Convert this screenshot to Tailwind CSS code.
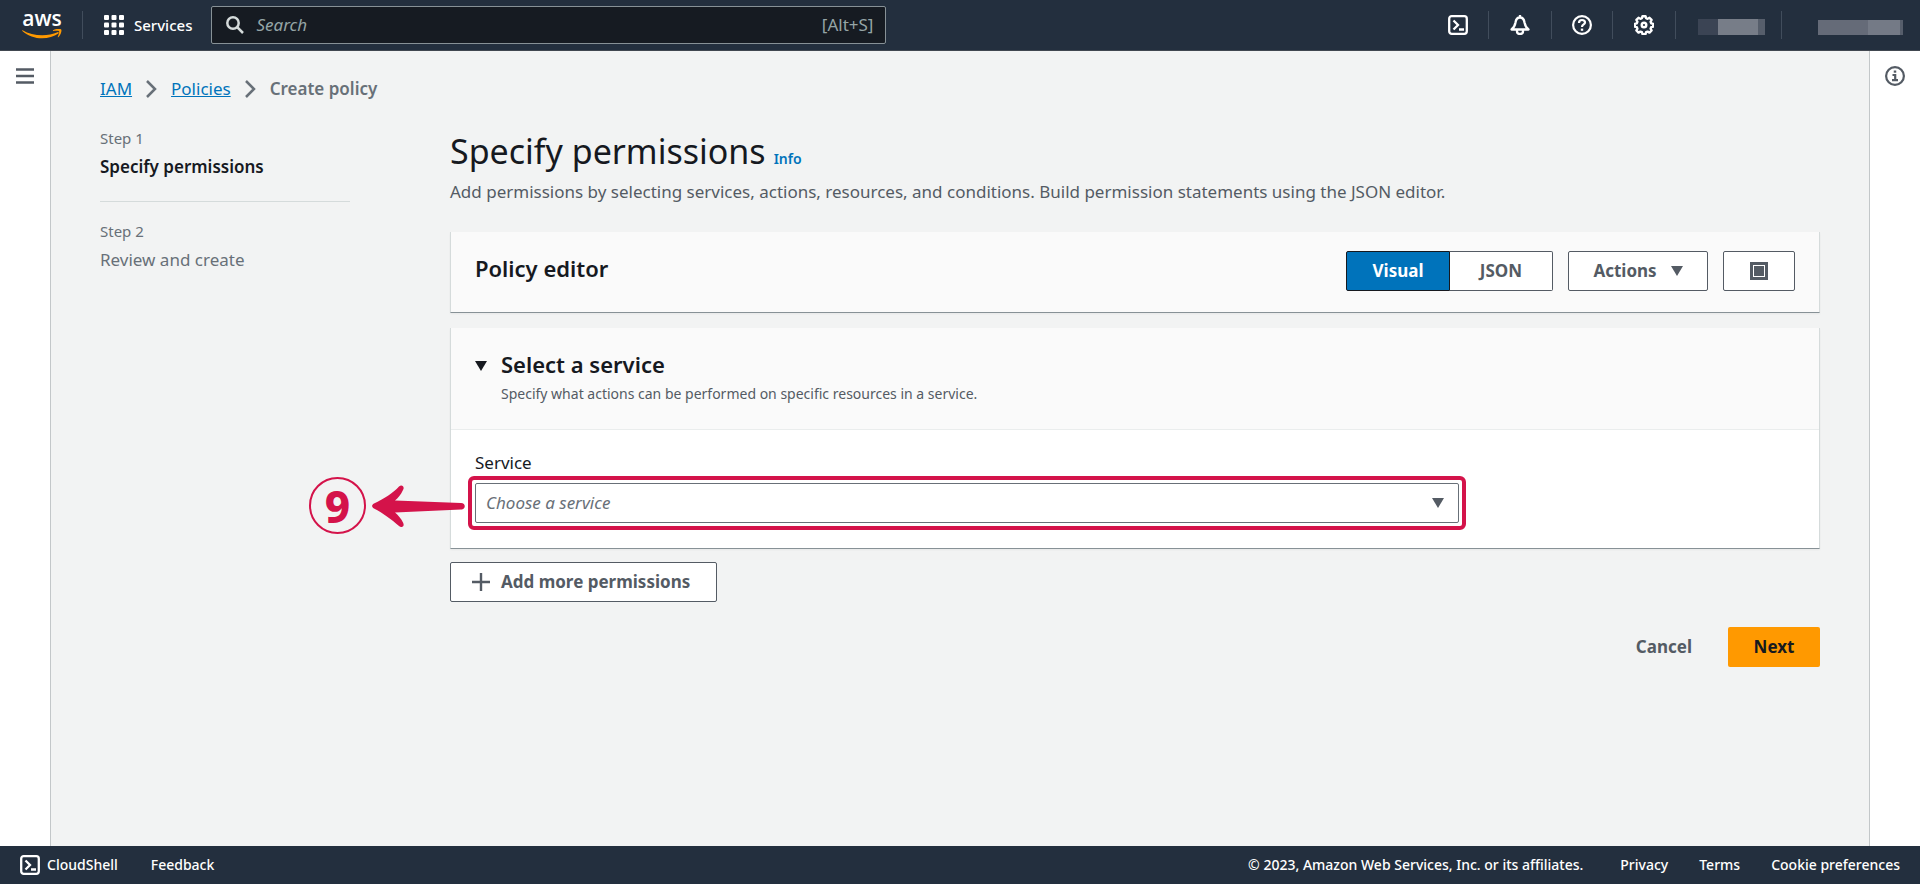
<!DOCTYPE html>
<html lang="en">
<head>
<meta charset="utf-8">
<meta name="viewport" content="width=device-width, initial-scale=1">
<title>Create policy | IAM</title>
<script src="https://cdn.jsdelivr.net/npm/@tailwindcss/browser@4"></script>
</head>
<body class="flex min-h-screen flex-col bg-[#f2f3f3] font-['Noto_Sans','Open_Sans',sans-serif] text-[17px] text-[#16191f]">

<header class="flex h-[51px] items-center border-b border-[#414750] bg-[#232f3e] text-white">
  <a href="#" aria-label="AWS home" class="ml-[22px] flex w-10 flex-col items-center">
    <span class="font-['Open_Sans',sans-serif] text-[21px] leading-[14px] font-semibold">aws</span>
    <svg class="mt-1 h-[10px] w-10" viewBox="0 0 40 10" fill="#ff9900"><path d="M.6 1.200C10 7 25 8 35.500 3.200c1-.4 1.700.5.900 1.200C27 11 11 11.500.3 1.900c-.4-.4 0-.9.300-.7z"/><path d="M31 1.200C34-.6 38.500-.4 39.200.4c.8 1-.2 5.600-2.700 7.700-.5.400-.9.200-.7-.4.800-1.900 1.800-4.600 1.200-5.400-.6-.7-3.700-.5-5.500-.3-.6.100-.8-.4-.5-.8z"/></svg>
  </a>
  <div class="ml-5 h-7 w-px bg-[#414d5c]"></div>
  <button type="button" class="ml-[21px] flex items-center gap-[10px] text-[15px] font-medium">
    <svg class="size-5" viewBox="0 0 20 20" fill="currentColor"><rect width="5" height="5" rx="1"/><rect x="7.500" width="5" height="5" rx="1"/><rect x="15" width="5" height="5" rx="1"/><rect y="7.500" width="5" height="5" rx="1"/><rect x="7.500" y="7.500" width="5" height="5" rx="1"/><rect x="15" y="7.500" width="5" height="5" rx="1"/><rect y="15" width="5" height="5" rx="1"/><rect x="7.500" y="15" width="5" height="5" rx="1"/><rect x="15" y="15" width="5" height="5" rx="1"/></svg>
    Services
  </button>
  <label class="ml-[19px] flex h-[38px] w-[675px] items-center rounded-xs border border-[#879196] bg-[#161b22] px-3">
    <svg class="ml-[2px] size-[18px] text-[#d5dbdb]" viewBox="0 0 18 18" fill="none" stroke="currentColor" stroke-width="2.500"><circle cx="7" cy="7" r="5.700"/><path d="M11.200 11.200 17 17"/></svg>
    <input type="search" aria-label="Search" placeholder="Search" class="ml-3 min-w-0 flex-1 bg-transparent italic outline-none placeholder:text-[#95a5a6]">
    <span class="text-[#95a5a6]">[Alt+S]</span>
  </label>
  <nav aria-label="Account tools" class="ml-auto flex items-center">
    <button type="button" aria-label="CloudShell" class="px-5"><svg class="size-5" viewBox="0 0 20 20" fill="none" stroke="currentColor" stroke-width="2.300"><rect x="1.200" y="1.200" width="17.600" height="17.600" rx="2.500"/><path d="M5.500 5.500 10 10l-4.500 4.500M11 14.500h5"/></svg></button>
    <div class="h-7 w-px bg-[#414d5c]"></div>
    <button type="button" aria-label="Notifications" class="px-[21px]"><svg class="size-5" viewBox="0 0 20 20" fill="none" stroke="currentColor" stroke-width="2.300" stroke-linejoin="round"><path d="M10 0v2.500M1.500 14.500C4 12.500 5 10.500 5.500 7.500 6 4 7.500 2.500 10 2.500S14 4 14.500 7.500c.5 3 1.500 5 4 7z"/><path d="M7 15v1.200C7 18 8.300 19 10 19s3-1 3-2.800V15"/></svg></button>
    <div class="h-7 w-px bg-[#414d5c]"></div>
    <button type="button" aria-label="Help" class="px-5"><svg class="size-5" viewBox="0 0 20 20" fill="none" stroke="currentColor" stroke-width="2.200"><circle cx="10" cy="10" r="8.900"/><path d="M7 8c0-2 1.300-3 3-3s3 1 3 2.600C13 9.500 10 9.500 10 12"/><path d="M10 13.600v2.200" stroke-width="2.400"/></svg></button>
    <div class="h-7 w-px bg-[#414d5c]"></div>
    <button type="button" aria-label="Settings" class="px-[21px]"><svg class="size-5" viewBox="0 0 20 20" fill="none" stroke="currentColor" stroke-width="2.400" stroke-linejoin="round"><path d="M8.500 1.200h3l.6 2 1.500.6 1.900-1 2.100 2.100-1 1.900.6 1.500 2 .6v2.600l-2 .6-.6 1.500 1 1.900-2.100 2.100-1.900-1-1.500.6-.6 2h-3l-.6-2-1.500-.6-1.900 1-2.100-2.100 1-1.900-.6-1.500-2-.6V8.900l2-.6.600-1.500-1-1.900 2.100-2.100 1.900 1 1.500-.6z"/><circle cx="10" cy="10" r="2.300"/></svg></button>
    <div class="h-7 w-px bg-[#414d5c]"></div>
    <button type="button" aria-label="Region" class="mt-1 ml-[22px] flex h-4"><span class="w-5 bg-[#3b4454]"></span><span class="w-10 bg-[#777d88]"></span><span class="w-[7px] bg-[#565e6b]"></span></button>
    <div class="ml-4 h-7 w-px bg-[#414d5c]"></div>
    <button type="button" aria-label="Account" class="mt-1 mr-[17px] ml-[36px] flex h-[15px]"><span class="w-[50px] bg-[#656b78]"></span><span class="w-8 bg-[#747a86]"></span><span class="w-[3px] bg-[#565e6b]"></span></button>
  </nav>
</header>

<div class="flex flex-1">
  <aside class="w-[51px] shrink-0 border-r border-[#c3c7c9] bg-white pt-[17px] pl-4">
    <button type="button" aria-label="Open navigation" class="block text-[#545b64]"><svg class="h-4 w-[18px]" viewBox="0 0 18 16" stroke="currentColor" stroke-width="2.500"><path d="M0 1.500h18M0 8h18M0 14.500h18"/></svg></button>
  </aside>

  <div class="min-w-0 flex-1 px-[49px] pt-[25px]">
    <nav aria-label="Breadcrumb" class="flex h-[26px] items-center">
      <a href="#" class="text-[#0073bb] underline">IAM</a>
      <svg class="mx-[14px] h-[18px] w-[11px] text-[#687078]" viewBox="0 0 11 18" fill="none" stroke="currentColor" stroke-width="2.500"><path d="m1 1 8 8-8 8"/></svg>
      <a href="#" class="text-[#0073bb] underline">Policies</a>
      <svg class="mx-[14px] h-[18px] w-[11px] text-[#687078]" viewBox="0 0 11 18" fill="none" stroke="currentColor" stroke-width="2.500"><path d="m1 1 8 8-8 8"/></svg>
      <span class="font-semibold text-[#687078]">Create policy</span>
    </nav>

    <div class="mt-6 flex gap-[100px]">
      <ol class="w-[250px] shrink-0">
        <li class="border-b border-[#d5dbdb] pb-[21px]">
          <div class="text-[15px] leading-[25px] text-[#687078]">Step 1</div>
          <div class="mt-[3px] leading-[26px] font-semibold">Specify permissions</div>
        </li>
        <li class="pt-[17px]">
          <div class="text-[15px] leading-[25px] text-[#687078]">Step 2</div>
          <div class="mt-[3px] leading-[26px] text-[#687078]">Review and create</div>
        </li>
      </ol>

      <main class="min-w-0 flex-1">
        <div class="flex items-baseline gap-2">
          <h1 class="text-[34px] leading-[50px]">Specify permissions</h1>
          <a href="#" class="text-sm font-semibold text-[#0073bb]">Info</a>
        </div>
        <p class="mt-[3px] leading-[26px] text-[#545b64]">Add permissions by selecting services, actions, resources, and conditions. Build permission statements using the JSON editor.</p>

        <section class="mt-[27px] flex items-start justify-between border-x border-x-[#d5dbdb] border-b border-b-[#879196] bg-[#fafafa] pt-[19px] pr-6 pb-[21px] pl-6 shadow-xs">
          <h2 class="text-[22px] leading-[34px] font-semibold">Policy editor</h2>
          <div class="flex gap-[15px] font-bold text-[#545b64]">
            <div class="flex" role="group" aria-label="Editor mode">
              <button type="button" aria-pressed="true" class="h-10 w-[104px] rounded-l-xs border border-[#16191f] bg-[#0073bb] text-white">Visual</button>
              <button type="button" aria-pressed="false" class="h-10 w-[103px] rounded-r-xs border border-l-0 border-[#545b64] bg-white">JSON</button>
            </div>
            <button type="button" class="flex h-10 w-[140px] items-center justify-center gap-[14px] rounded-xs border border-[#545b64] bg-white">Actions <svg class="h-[10px] w-3" viewBox="0 0 12 10" fill="currentColor"><path d="M0 0h12L6 10z"/></svg></button>
            <button type="button" aria-label="Full screen" class="flex h-10 w-[72px] items-center justify-center rounded-xs border border-[#545b64] bg-white"><svg class="size-[18px]" viewBox="0 0 18 18" fill="currentColor"><path d="M0 0h18v18H0zM3 3v12h12V3z" fill-rule="evenodd"/><path d="M4 4h10v10H4z"/></svg></button>
          </div>
        </section>

        <section class="mt-[15px] border-x border-x-[#d5dbdb] border-b border-b-[#879196] bg-white shadow-xs">
          <div class="flex gap-[14px] border-b border-[#eaeded] bg-[#fafafa] px-6 pt-[19px] pb-6">
            <button type="button" aria-label="Collapse section" class="mt-[14px] h-[10px]"><svg class="h-[10px] w-3" viewBox="0 0 12 10" fill="currentColor"><path d="M0 0h12L6 10z"/></svg></button>
            <div>
              <h2 class="text-[22px] leading-[34px] font-semibold">Select a service</h2>
              <p class="mt-[2px] text-sm leading-[22px] text-[#545b64]">Specify what actions can be performed on specific resources in a service.</p>
            </div>
          </div>
          <div class="px-6 pt-5 pb-[25px]">
            <label for="service" class="block leading-[26px]">Service</label>
            <div class="relative mt-[7px] w-[calc(75%-6px)]">
              <select id="service" class="block h-10 w-full appearance-none rounded-xs border border-[#687078] bg-white px-[10px] text-[#687078] italic"><option>Choose a service</option></select>
              <svg class="pointer-events-none absolute top-[15px] right-[15px] h-[10px] w-3 text-[#545b64]" viewBox="0 0 12 10" fill="currentColor"><path d="M0 0h12L6 10z"/></svg>
              <div class="pointer-events-none absolute -inset-[7px] rounded-md border-4 border-[#d4134a]"></div>
              <div class="pointer-events-none absolute top-[-6px] right-full mr-[10px] flex items-center gap-[6px] text-[#d4134a]">
                <span class="flex size-[57px] shrink-0 items-center justify-center rounded-full border-2 border-current text-[44px] leading-none font-extrabold">9</span>
                <svg class="h-[42px] w-[93px]" viewBox="0 0 93 42" fill="currentColor"><path d="M2 18.500C12 14 21 8 27 1.500c3-2.500 6 .5 4 3.500-2 4.500-5 8-8 10.500l66 2.500c5 0 5 6.500 0 6.500l-66 3c3 2.500 6 6 8 10 2 3.500-1 6-4 3.500C20 35 11 28 2 23.500c-2.500-1.500-2.500-3.500 0-5z"/></svg>
              </div>
            </div>
          </div>
        </section>

        <button type="button" class="mt-[13px] flex h-10 w-[267px] items-center gap-[11px] rounded-xs border border-[#545b64] bg-white px-[21px] font-bold text-[#545b64]"><svg class="size-[18px]" viewBox="0 0 18 18" stroke="currentColor" stroke-width="2.400"><path d="M9 0v18M0 9h18"/></svg>Add more permissions</button>

        <div class="mt-[25px] flex justify-end gap-[10px] font-bold">
          <button type="button" class="h-10 px-[26px] text-[#545b64]">Cancel</button>
          <button type="button" class="h-10 w-[92px] rounded-xs bg-[#ff9900]">Next</button>
        </div>
      </main>
    </div>
  </div>

  <aside class="w-[51px] shrink-0 border-l border-[#c3c7c9] bg-white pt-[15px] pl-[15px]">
    <button type="button" aria-label="Open help panel" class="block text-[#545b64]"><svg class="size-5" viewBox="0 0 20 20" fill="none" stroke="currentColor" stroke-width="2.200"><circle cx="10" cy="10" r="8.900"/><path d="M10 4.500v2.200" stroke-width="2.500"/><path d="M7.500 9h2.700v5M7 14.200h6"/></svg></button>
  </aside>
</div>

<footer class="flex h-[38px] items-center bg-[#232f3e] px-5 text-sm font-medium text-white">
  <button type="button" class="flex items-center gap-[7px]"><svg class="size-5" viewBox="0 0 20 20" fill="none" stroke="currentColor" stroke-width="2.300"><rect x="1.200" y="1.200" width="17.600" height="17.600" rx="2.500"/><path d="M5.500 5.500 10 10l-4.500 4.500M11 14.500h5"/></svg>CloudShell</button>
  <a href="#" class="ml-[33px]">Feedback</a>
  <span class="ml-auto">© 2023, Amazon Web Services, Inc. or its affiliates.</span>
  <a href="#" class="ml-[37px]">Privacy</a>
  <a href="#" class="ml-[31px]">Terms</a>
  <a href="#" class="ml-[31px]">Cookie preferences</a>
</footer>
</body>
</html>
